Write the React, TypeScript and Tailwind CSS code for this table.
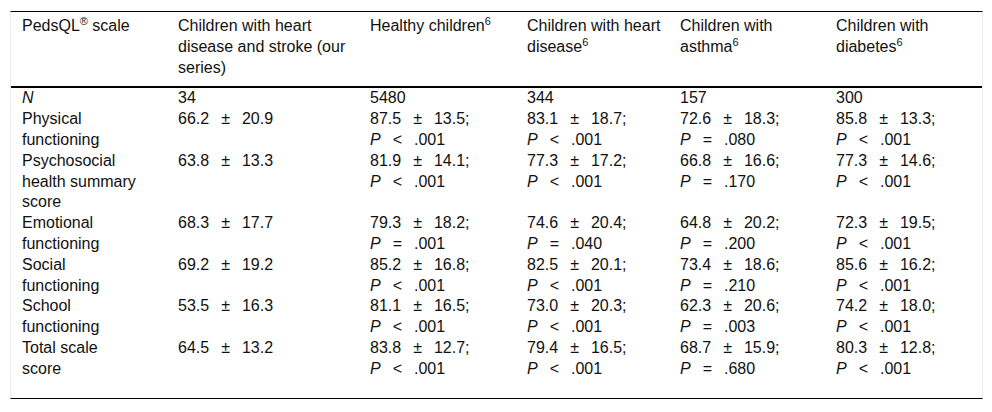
import React from 'react'

type Stat = { m: string; sd: string; op?: string; p?: string }

const rows: { label: string; n?: string[]; ours?: Stat; others?: Stat[] }[] = [
  { label: 'N', n: ['34', '5480', '344', '157', '300'] },
  {
    label: 'Physical functioning',
    ours: { m: '66.2', sd: '20.9' },
    others: [
      { m: '87.5', sd: '13.5', op: '<', p: '.001' },
      { m: '83.1', sd: '18.7', op: '<', p: '.001' },
      { m: '72.6', sd: '18.3', op: '=', p: '.080' },
      { m: '85.8', sd: '13.3', op: '<', p: '.001' },
    ],
  },
  {
    label: 'Psychosocial health summary score',
    ours: { m: '63.8', sd: '13.3' },
    others: [
      { m: '81.9', sd: '14.1', op: '<', p: '.001' },
      { m: '77.3', sd: '17.2', op: '<', p: '.001' },
      { m: '66.8', sd: '16.6', op: '=', p: '.170' },
      { m: '77.3', sd: '14.6', op: '<', p: '.001' },
    ],
  },
  {
    label: 'Emotional functioning',
    ours: { m: '68.3', sd: '17.7' },
    others: [
      { m: '79.3', sd: '18.2', op: '=', p: '.001' },
      { m: '74.6', sd: '20.4', op: '=', p: '.040' },
      { m: '64.8', sd: '20.2', op: '=', p: '.200' },
      { m: '72.3', sd: '19.5', op: '<', p: '.001' },
    ],
  },
  {
    label: 'Social functioning',
    ours: { m: '69.2', sd: '19.2' },
    others: [
      { m: '85.2', sd: '16.8', op: '<', p: '.001' },
      { m: '82.5', sd: '20.1', op: '<', p: '.001' },
      { m: '73.4', sd: '18.6', op: '=', p: '.210' },
      { m: '85.6', sd: '16.2', op: '<', p: '.001' },
    ],
  },
  {
    label: 'School functioning',
    ours: { m: '53.5', sd: '16.3' },
    others: [
      { m: '81.1', sd: '16.5', op: '<', p: '.001' },
      { m: '73.0', sd: '20.3', op: '<', p: '.001' },
      { m: '62.3', sd: '20.6', op: '=', p: '.003' },
      { m: '74.2', sd: '18.0', op: '<', p: '.001' },
    ],
  },
  {
    label: 'Total scale score',
    ours: { m: '64.5', sd: '13.2' },
    others: [
      { m: '83.8', sd: '12.7', op: '<', p: '.001' },
      { m: '79.4', sd: '16.5', op: '<', p: '.001' },
      { m: '68.7', sd: '15.9', op: '=', p: '.680' },
      { m: '80.3', sd: '12.8', op: '<', p: '.001' },
    ],
  },
]

function Sup({ children }: { children: React.ReactNode }) {
  return <sup className="relative top-[-6px] text-[11px] leading-none">{children}</sup>
}

function Value({ s }: { s: Stat }) {
  return (
    <div>
      <div className="flex gap-[12px] whitespace-nowrap">
        <span>{s.m}</span>
        <span>±</span>
        <span>
          {s.sd}
          {s.p ? ';' : ''}
        </span>
      </div>
      {s.p && (
        <div className="flex gap-[12px] whitespace-nowrap">
          <span className="italic">P</span>
          <span>{s.op}</span>
          <span>{s.p}</span>
        </div>
      )}
    </div>
  )
}

export default function App() {
  const cell = 'pl-[11px] pr-[6px] align-top text-left font-normal'
  const head = `${cell} pt-[4px] pb-[8px]`

  return (
    <div className="min-h-[412px] bg-white pt-[11px] pl-[10px] text-[16px] leading-[20.8px] text-[#111] [font-family:'Liberation_Sans',Arial,sans-serif]">
      <div className="w-[973px] border-x border-[#ebebeb] border-t border-t-black border-b border-b-black pb-[18px]">
        <table className="w-[971px] table-fixed border-collapse">
          <colgroup>
            <col className="w-[156px]" />
            <col className="w-[192px]" />
            <col className="w-[157px]" />
            <col className="w-[153px]" />
            <col className="w-[156px]" />
            <col className="w-[157px]" />
          </colgroup>
          <thead>
            <tr className="border-b-2 border-black">
              <th className={head}>
                PedsQL<Sup>®</Sup> scale
              </th>
              <th className={head}>Children with heart disease and stroke (our series)</th>
              <th className={head}>
                Healthy children<Sup>6</Sup>
              </th>
              <th className={head}>
                Children with heart disease<Sup>6</Sup>
              </th>
              <th className={head}>
                Children with asthma<Sup>6</Sup>
              </th>
              <th className={head}>
                Children with diabetes<Sup>6</Sup>
              </th>
            </tr>
          </thead>
          <tbody>
            {rows.map((r) => (
              <tr key={r.label}>
                <td className={`${cell} pr-[30px]`}>
                  {r.label === 'N' ? <span className="italic">N</span> : r.label}
                </td>
                {r.n
                  ? r.n.map((v, i) => (
                      <td key={i} className={cell}>
                        {v}
                      </td>
                    ))
                  : [r.ours!, ...r.others!].map((s, i) => (
                      <td key={i} className={cell}>
                        <Value s={s} />
                      </td>
                    ))}
              </tr>
            ))}
          </tbody>
        </table>
      </div>
    </div>
  )
}
